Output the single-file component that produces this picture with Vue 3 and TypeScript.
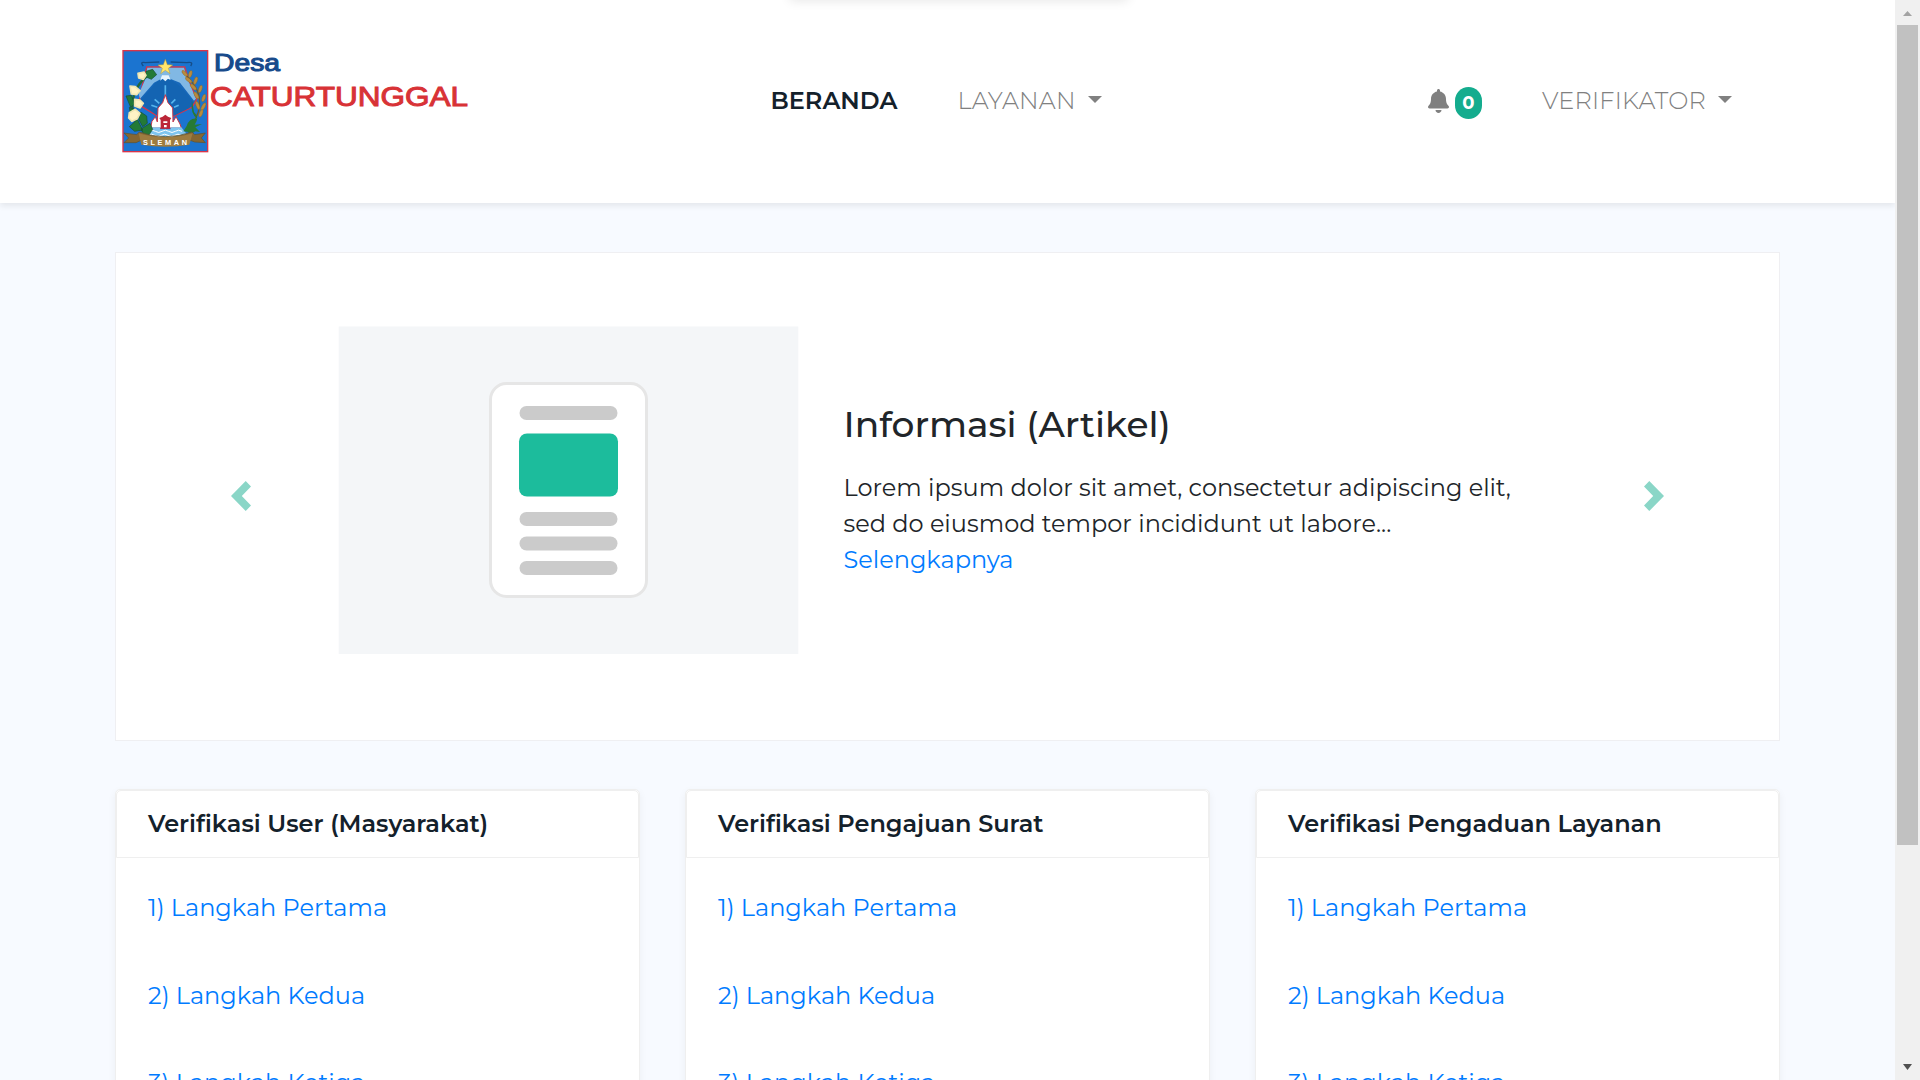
<script setup lang="ts">
interface Step {
  label: string
}
interface Panel {
  title: string
}

const steps: Step[] = [
  { label: '1) Langkah Pertama' },
  { label: '2) Langkah Kedua' },
  { label: '3) Langkah Ketiga' },
]

const panels: Panel[] = [
  { title: 'Verifikasi User (Masyarakat)' },
  { title: 'Verifikasi Pengajuan Surat' },
  { title: 'Verifikasi Pengaduan Layanan' },
]
</script>

<template>
  <div class="window">
    <div class="page">
      <header class="navbar">
        <div class="top-shade"></div>
        <svg class="logo" width="352" height="112" viewBox="118 44 352 112">
          <g transform="translate(118 44) scale(.33333)">
            <rect x="15" y="20" width="254" height="303" fill="#1b74d0" stroke="#d8344a" stroke-width="4" />
            <path d="M76 66 Q64 52 82 56 L124 54 M218 66 Q228 52 206 56 L158 54" fill="none" stroke="#164d88" stroke-width="4" />
            <path d="M86 69 H200 L212 108 L236 166 L222 190 L164 218 L142 160 L118 216 L62 182 L68 146 Z" fill="#1768ba" stroke="#d8344a" stroke-width="4" />
            <path d="M88 71 H198 L210 108 L234 164 L228 170 L186 116 L156 104 H130 L108 116 L66 164 L62 150 L80 110 Z" fill="#81b8e4" />
            <path d="M64 172 Q96 138 112 118 L130 106 H156 L174 118 Q196 132 226 176 L214 192 L166 216 L142 150 L116 214 Z" fill="#1464b2" />
            <path d="M132 94 H152 L158 108 L150 104 L142 112 L134 104 L126 110 Z" fill="#e6f4ff" />
            <path d="M142 46 L148 62 L164 63 L151 73 L156 89 L142 79 L128 89 L133 73 L120 63 L136 62 Z" fill="#ffe66b" stroke="#b59a3c" stroke-width="1.5" />
            <path d="M142 124 V156 M110 166 L124 178 M172 166 L160 178 M100 184 L118 190 M182 184 L168 190" stroke="#57b5ee" stroke-width="5" />
            <path d="M142 152 L150 176 L164 192 L165 234 L174 218 L186 240 L190 252 H98 L102 232 L112 218 L118 234 L120 192 L134 176 Z" fill="#fff" stroke="#c93649" stroke-width="3" />
            <path d="M128 254 V228 L124 222 L134 218 L142 212 L150 218 L160 222 L156 228 V254 Z" fill="#bb2638" />
            <path d="M136 232 H148 V237 H136 Z M138 243 H146 V250 H138 Z" fill="#fff" />
            <path d="M98 250 H126 V256 H158 V250 H190 L206 270 L202 280 Q142 290 88 278 Z" fill="#7fc5ef" />
            <path d="M92 262 q10 -7 20 0 t20 0 t20 0 t20 0 t20 0 M90 274 q10 -7 20 0 t20 0 t20 0 t20 0 t20 0" fill="none" stroke="#fff" stroke-width="3" />
            <path d="M100 86 Q36 130 44 202 Q52 250 88 270" fill="none" stroke="#236839" stroke-width="7" />
            <path d="M84 82 L104 76 L116 92 L100 106 L82 98 Z M24 156 L40 154 L50 180 L38 190 Z M34 190 L50 196 L54 220 L38 216 Z M68 204 L86 216 L88 238 L74 248 L62 226 Z M34 248 L58 226 L74 258 L50 262 Z M70 254 L96 238 L104 256 L88 280 L76 270 Z" fill="#237a37" stroke="#154e36" stroke-width="2" />
            <path d="M60 88 L78 84 L84 94 L76 106 L62 102 Z M36 126 L52 128 L66 140 L56 152 L40 150 Z M50 166 L66 168 L76 178 L66 192 L50 186 Z M34 206 L52 196 L66 208 L58 224 L42 232 L32 222 Z" fill="#fff3c5" stroke="#f0e6b2" stroke-width="5" stroke-linejoin="round" />
            <path d="M194 84 Q238 124 244 160 Q250 206 218 248" fill="none" stroke="#6f5b29" stroke-width="4" />
            <g fill="#b98b3d" stroke="#74602d" stroke-width="1">
              <ellipse cx="200" cy="88" rx="5" ry="11" transform="rotate(-42 200 88)" />
              <ellipse cx="217" cy="90" rx="5" ry="11" transform="rotate(15 217 90)" />
              <ellipse cx="212" cy="108" rx="5" ry="12" transform="rotate(-50 212 108)" />
              <ellipse cx="233" cy="110" rx="5" ry="12" transform="rotate(20 233 110)" />
              <ellipse cx="226" cy="129" rx="5" ry="12" transform="rotate(-45 226 129)" />
              <ellipse cx="247" cy="135" rx="5" ry="12" transform="rotate(18 247 135)" />
              <ellipse cx="235" cy="154" rx="5" ry="12" transform="rotate(-30 235 154)" />
              <ellipse cx="257" cy="162" rx="5" ry="12" transform="rotate(18 257 162)" />
              <ellipse cx="239" cy="184" rx="5" ry="13" transform="rotate(-20 239 184)" />
              <ellipse cx="256" cy="188" rx="5" ry="13" transform="rotate(28 256 188)" />
              <ellipse cx="249" cy="208" rx="5" ry="12" transform="rotate(20 249 208)" />
            </g>
            <path d="M222 170 Q216 210 238 224 Q214 220 206 246 L196 262 L212 264 L204 280 L232 262 L246 264 L232 250 L252 240 L230 242 Q246 220 228 204 Z" fill="#267a35" />
            <path d="M18 267 L56 272 L64 264 Q142 292 222 264 L230 272 L262 267 L250 282 L262 296 L230 294 L214 288 Q142 312 72 288 L54 296 L18 296 L32 282 Z" fill="#856632" stroke="#5e522f" stroke-width="2" />
            <path d="M62 268 Q142 292 224 268 L214 302 Q142 314 70 302 Z" fill="#9e7c40" />
            <text x="75" y="303" font-size="22" font-weight="700" fill="#fff" textLength="132">SLEMAN</text>
          </g>
          <text x="214" y="71" font-size="24" stroke="#174a8b" stroke-width="1.1" fill="#174a8b" textLength="66" lengthAdjust="spacingAndGlyphs">Desa</text>
          <text x="210" y="105.8" font-size="28" stroke="#d83236" stroke-width="1" fill="#d83236" textLength="258" lengthAdjust="spacingAndGlyphs">CATURTUNGGAL</text>
        </svg>
        <nav class="menu">
          <a class="active">BERANDA</a>
          <a>LAYANAN<i class="caret"></i></a>
        </nav>
        <div class="account">
          <a class="bell">
            <svg width="21" height="24" viewBox="0 0 448 512"><path fill="#808080" d="M224 512c35.300 0 63.900-28.650 63.900-64H160.100c0 35.350 28.600 64 63.900 64zm215.400-149.700c-19.300-20.800-55.500-52-55.500-154.300 0-77.700-54.500-139.900-127.900-155.200V32c0-17.700-14.300-32-32-32s-32 14.300-32 32v20.800C118.600 68.100 64.100 130.300 64.100 208c0 102.300-36.200 133.500-55.500 154.300-6 6.500-8.600 14.200-8.600 21.700.1 16.400 13 32 32.100 32h383.800c19.100 0 32-15.600 32.100-32 0-7.500-2.600-15.200-8.600-21.700z" /></svg>
            <b class="badge">0</b>
          </a>
          <a>VERIFIKATOR<i class="caret"></i></a>
        </div>
      </header>

      <main>
        <section class="hero">
          <svg class="arrow prev" width="20" height="30" viewBox="0 0 20 30"><path d="M14.700 0 L20 5.400 L10.800 15 L20 24.600 L14.700 30 L0 15 Z" fill="#8ad6c7" /></svg>
          <svg class="cover" width="461" height="328" viewBox="0 0 461 328">
            <rect x=".7" y=".5" width="459.600" height="327.500" fill="#f4f6f8" />
            <rect x="152.500" y="57.500" width="156" height="213" rx="16" fill="#fff" stroke="#e6e6e6" stroke-width="3" />
            <g fill="#cbcbcb">
              <rect x="181.500" y="80" width="98" height="14" rx="7" />
              <rect x="181.500" y="186" width="98" height="14" rx="7" />
              <rect x="181.500" y="210.500" width="98" height="14" rx="7" />
              <rect x="181.500" y="235" width="98" height="14" rx="7" />
            </g>
            <rect x="181" y="107.500" width="99" height="63" rx="8" fill="#1cbc9c" />
          </svg>
          <div class="article">
            <h3>Informasi (Artikel)</h3>
            <p>Lorem ipsum dolor sit amet, consectetur adipiscing elit,</p>
            <p>sed do eiusmod tempor incididunt ut labore...</p>
            <p class="more">Selengkapnya</p>
          </div>
          <svg class="arrow next" width="20" height="30" viewBox="0 0 20 30"><path d="M5.300 0 L0 5.400 L9.200 15 L0 24.600 L5.300 30 L20 15 Z" fill="#8ad6c7" /></svg>
        </section>

        <section class="panels">
          <article v-for="p in panels" :key="p.title" class="panel">
            <h4>{{ p.title }}</h4>
            <ul>
              <li v-for="s in steps" :key="s.label">{{ s.label }}</li>
            </ul>
          </article>
        </section>
      </main>
    </div>

    <div class="scrollbar">
      <svg width="25" height="25" viewBox="0 0 25 25"><path d="M8 16 H17 L12.500 11 Z" fill="#a3a3a3" /></svg>
      <div class="thumb"></div>
      <svg width="25" height="25" viewBox="0 0 25 25"><path d="M8 9 H17 L12.500 15 Z" fill="#505050" /></svg>
    </div>
  </div>
</template>

<style>
html,
body {
  margin: 0;
  overflow: hidden;
}
</style>

<style scoped>
.window {
  display: flex;
  width: 1920px;
  height: 1080px;
  overflow: hidden;
  font-family: Montserrat, Inter, sans-serif;
  font-size: 24px;
  font-weight: 400;
  color: #212529;
}
.page {
  width: 1895px;
  height: 1080px;
  overflow: hidden;
  background: #f7faff;
}
.navbar {
  position: relative;
  box-sizing: border-box;
  display: flex;
  align-items: flex-start;
  height: 203px;
  padding: 44px 0 0 118px;
  background: #fff;
  box-shadow: 0 3px 6px rgba(0, 0, 0, 0.08);
}
.top-shade {
  position: absolute;
  top: -10px;
  left: 790px;
  width: 338px;
  height: 10px;
  box-shadow: 0 0 12px rgba(0, 0, 0, 0.12);
}
.logo {
  flex: none;
  font-family: 'Liberation Sans', Arial, sans-serif;
}
.menu {
  display: flex;
  width: 958px;
  box-sizing: border-box;
  padding-left: 300.5px;
}
.menu a,
.account a {
  display: flex;
  align-items: center;
  height: 36px;
  margin-top: 38.5px;
  font-weight: 300;
  letter-spacing: 0.2px;
  white-space: nowrap;
  color: #808080;
}
.menu .active {
  width: 187px;
  font-weight: 600;
  letter-spacing: 0;
  color: #14212b;
}
.caret {
  width: 0;
  height: 0;
  margin: -2px 0 0 12.5px;
  border: 7px solid transparent;
  border-top-color: #808080;
  border-bottom: 0;
}
.account {
  display: flex;
}
.account .bell {
  width: 114px;
}
.badge {
  width: 27px;
  height: 32px;
  margin: 5px 0 0 6px;
  border-radius: 14px;
  background: #14ac8e;
  color: #fff;
  font-size: 18px;
  font-weight: 700;
  line-height: 32px;
  text-align: center;
}
main {
  padding: 49px 115px 0;
}
.hero {
  position: relative;
  box-sizing: border-box;
  display: flex;
  align-items: flex-start;
  height: 489px;
  padding: 73px 0 0 222px;
  border: 1px solid #efeff2;
  background: #fff;
}
.arrow {
  position: absolute;
  top: 228px;
}
.prev {
  left: 115px;
}
.next {
  right: 115px;
}
.cover {
  flex: none;
}
.article {
  padding: 77px 0 0 44.500px;
  white-space: nowrap;
}
h3,
h4,
p,
ul {
  margin: 0;
  padding: 0;
}
h3 {
  margin-bottom: 23.5px;
  font-size: 36px;
  font-weight: 500;
  line-height: 43px;
}
p {
  line-height: 36px;
}
.more {
  color: #007bff;
}
.panels {
  display: flex;
  gap: 45px;
  margin-top: 48px;
}
.panel {
  box-sizing: border-box;
  width: 525px;
  height: 420px;
  border: 1px solid #efefef;
  border-radius: 5px;
  background: #fff;
  box-shadow: 0 3px 8px rgba(0, 0, 0, 0.05);
}
h4 {
  height: 66px;
  padding-left: 31px;
  border: 1px solid #efefef;
  border-radius: 5px 5px 0 0;
  font-size: 24px;
  font-weight: 600;
  line-height: 66px;
  color: #14212b;
  white-space: nowrap;
}
ul {
  display: flex;
  flex-direction: column;
  gap: 0.5px;
  padding: 6px 0 0 32px;
  list-style: none;
}
li {
  height: 87px;
  line-height: 87px;
  color: #007bff;
  white-space: nowrap;
}
.scrollbar {
  display: flex;
  flex-direction: column;
  justify-content: space-between;
  width: 25px;
  height: 1080px;
  background: #f0f0f0;
}
.thumb {
  width: 21px;
  height: 820px;
  margin: 0 auto 210px 2px;
  background: #c1c1c1;
}
</style>
